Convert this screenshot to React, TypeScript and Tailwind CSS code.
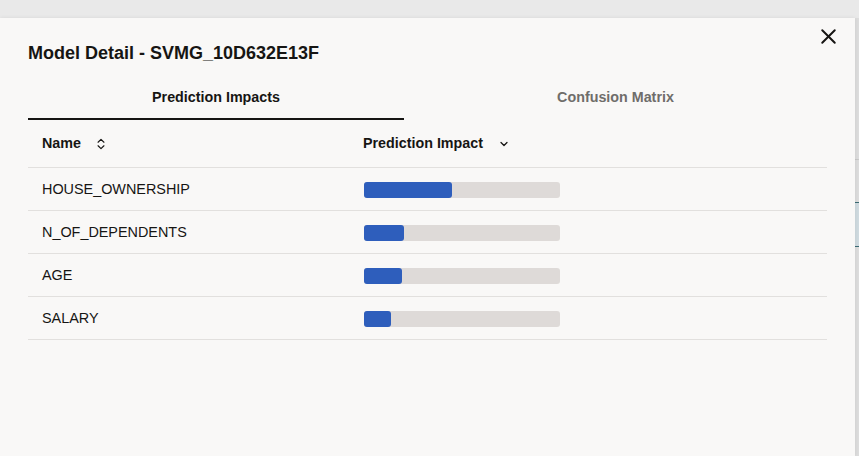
import { X, ChevronsUpDown, ChevronDown } from "lucide-react";

const ROWS = [
  { name: "HOUSE_OWNERSHIP", impact: 88 },
  { name: "N_OF_DEPENDENTS", impact: 40 },
  { name: "AGE", impact: 38 },
  { name: "SALARY", impact: 27 },
];

export default function App() {
  return (
    <div
      className="flex h-[456px] w-[859px] overflow-hidden bg-[#e9e9e9] pt-[18px]"
      style={{ fontFamily: '"Liberation Sans", Arial, sans-serif' }}
    >
      {/* dialog */}
      <div className="relative flex h-full w-[855px] flex-col bg-[#f9f8f7] px-[28px] pt-[24px] shadow-[0_0_4px_rgba(0,0,0,0.08)]">
        <button type="button" className="absolute right-[14px] top-[6px] text-[#161513]" aria-label="Close">
          <X className="h-[25px] w-[25px]" strokeWidth={1.9} />
        </button>

        <h2 className="text-[18px] font-bold leading-[22px] text-[#161513]">Model Detail - SVMG_10D632E13F</h2>

        {/* tabs */}
        <div className="mt-[20px] flex w-[799px]">
          <div className="flex h-[36px] w-[376px] items-start justify-center border-b-2 border-[#161513] pt-[3px] text-[14.3px] font-bold text-[#161513]">
            Prediction Impacts
          </div>
          <div className="flex h-[36px] flex-1 items-start justify-center pt-[3px] text-[14.3px] font-bold text-[#6f6d6a]">
            Confusion Matrix
          </div>
        </div>

        {/* table */}
        <div className="w-[799px]">
          <div className="flex h-[48px] items-center border-b border-[#e2e0de] text-[14.3px] font-bold text-[#161513]">
            <div className="flex w-[335px] items-center gap-[13px] pl-[14px]">
              Name
              <ChevronsUpDown className="h-[14px] w-[14px]" strokeWidth={2} />
            </div>
            <div className="flex items-center gap-[15px]">
              Prediction Impact
              <ChevronDown className="h-[12px] w-[12px]" strokeWidth={2.5} />
            </div>
          </div>
          {ROWS.map((r) => (
            <div key={r.name} className="flex h-[43px] items-center border-b border-[#e2e0de] pt-[1px] text-[14.4px] text-[#161513]">
              <div className="w-[336px] pl-[14px]">{r.name}</div>
              <div className="h-[16px] w-[196px] rounded-[3px] bg-[#dedad8]">
                <div className="h-full rounded-[3px] bg-[#2e5ebc]" style={{ width: r.impact }} />
              </div>
            </div>
          ))}
        </div>
      </div>

      {/* page behind, right edge */}
      <div className="flex h-full w-[4px] flex-col bg-[#dcdcdc]">
        <div className="mt-[141px] h-px bg-[#c8c8c8]" />
        <div className="mt-[42px] h-[45px] border-y border-[#3b6b73] bg-[#cfdadf]" />
      </div>
    </div>
  );
}
